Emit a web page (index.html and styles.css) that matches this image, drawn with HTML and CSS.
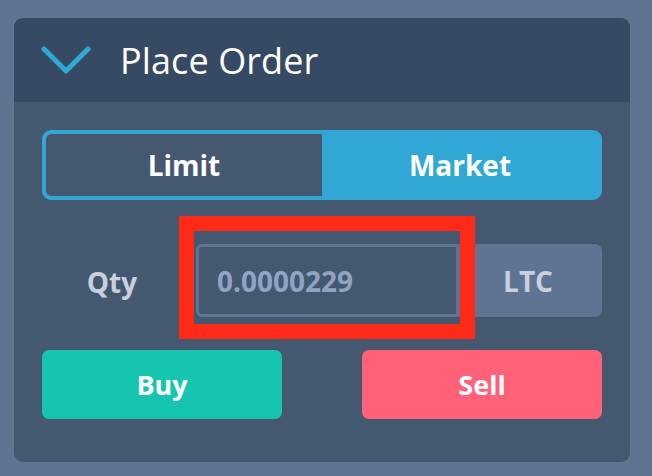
FILE: index.html
```html
<!DOCTYPE html>
<html>
<head>
<meta charset="utf-8">
<link rel="stylesheet" href="styles.css">
</head>
<body>
<div class="panel">
  <div class="panel-head">
    <svg class="chev" width="52" height="32" viewBox="0 0 52 32">
      <polyline points="3,3 25,25 47,3" fill="none" stroke="#31a7d6" stroke-width="5" stroke-linecap="round" stroke-linejoin="round"/>
    </svg>
    <h1 class="title">Place Order</h1>
  </div>
  <div class="panel-body">
    <div class="toggle">
      <div class="tab">Limit</div>
      <div class="tab active">Market</div>
    </div>
    <div class="qty-row">
      <label class="qty-label">Qty</label>
      <div class="input-wrap">
        <div class="qty-input">0.0000229</div>
        <div class="highlight"></div>
      </div>
      <div class="addon">LTC</div>
    </div>
    <div class="actions">
      <button class="btn buy">Buy</button>
      <button class="btn sell">Sell</button>
    </div>
  </div>
</div>
</body>
</html>
```

FILE: styles.css
```css
* { box-sizing: border-box; }
html, body {
  margin: 0;
  padding: 0;
}
body {
  background: #5f7493;
  font-family: "Open Sans", "Liberation Sans", sans-serif;
  width: 652px;
  height: 476px;
  padding: 18px 22px 14px 14px;
}
.panel {
  width: 616px;
  height: 444px;
  background: #44586f;
  border-radius: 9px;
  overflow: hidden;
  display: flex;
  flex-direction: column;
}
.panel-head {
  height: 84px;
  background: #364a63;
  display: flex;
  align-items: center;
  padding-left: 28px;
}
.chev {
  display: block;
  margin-left: -1px;
  margin-top: 4px;
}
.title {
  margin: 0 0 0 27px;
  font-size: 36px;
  font-weight: 400;
  color: #ffffff;
  letter-spacing: 0.1px;
}
.panel-body {
  padding: 28px 28px 0 28px;
  display: flex;
  flex-direction: column;
}
.toggle {
  height: 70px;
  display: flex;
  border: 4px solid #31a7d6;
  border-radius: 9px;
  background: #31a7d6;
  overflow: hidden;
}
.tab {
  flex: 1;
  display: flex;
  align-items: center;
  justify-content: center;
  color: #ffffff;
  font-weight: 700;
  font-size: 28px;
}
.tab:first-child {
  background: #44586f;
  border-radius: 5px 0 0 5px;
  flex: 0 0 276px;
}
.qty-row {
  margin-top: 44px;
  height: 73px;
  display: flex;
}
.qty-label {
  width: 154px;
  display: flex;
  align-items: center;
  justify-content: center;
  color: #c8d0dd;
  font-weight: 700;
  font-size: 28px;
  padding-top: 2px;
  padding-right: 14px;
}
.input-wrap {
  position: relative;
  width: 262px;
}
.qty-input {
  height: 100%;
  border: 3px solid #5f7493;
  border-right-width: 2px;
  border-radius: 6px 0 0 6px;
  background: #44586f;
  color: #91a3c3;
  font-weight: 700;
  font-size: 28px;
  display: flex;
  align-items: center;
  padding-left: 18px;
}
.highlight {
  position: absolute;
  left: -17px;
  top: -28px;
  width: 296px;
  height: 123px;
  border: 15px solid #ff2a18;
}
.addon {
  width: 144px;
  background: #5f7493;
  border-radius: 0 7px 7px 0;
  display: flex;
  align-items: center;
  justify-content: center;
  color: #c8d0dd;
  font-weight: 700;
  font-size: 28px;
  padding-right: 4px;
}
.actions {
  margin-top: 33px;
  display: flex;
  justify-content: space-between;
}
.btn {
  width: 240px;
  height: 69px;
  border: none;
  border-radius: 7px;
  color: #ffffff;
  font-family: "Open Sans", "Liberation Sans", sans-serif;
  font-weight: 700;
  font-size: 27px;
  padding: 0;
}
.buy { background: #16c5b0; }
.sell { background: #ff6179; }
```
